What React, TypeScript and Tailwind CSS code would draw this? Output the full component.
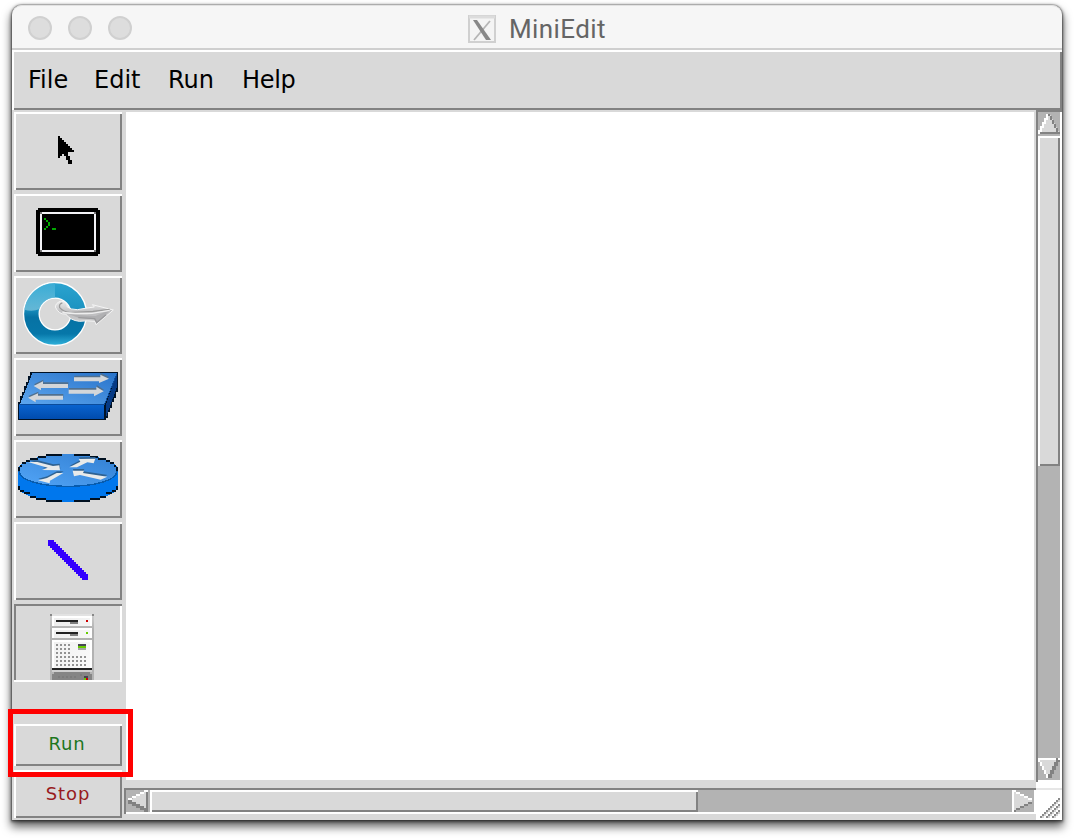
import React from 'react';

type IconProps = { viewBox: string; children: React.ReactNode; crisp?: boolean };

function Icon({ viewBox, children, crisp = true }: IconProps) {
  return (
    <svg viewBox={viewBox} className="block h-[74px] w-[104px]" shapeRendering={crisp ? 'crispEdges' : 'auto'}>
      {children}
    </svg>
  );
}

const cursorRuns: [number, number, number][] = [
  [0, 0, 1], [1, 0, 2], [2, 0, 3], [3, 0, 4], [4, 0, 5], [5, 0, 6], [6, 0, 7], [7, 0, 8],
  [8, 0, 5], [9, 0, 2], [9, 3, 2], [10, 0, 1], [10, 4, 2], [11, 4, 2], [12, 5, 2], [13, 5, 2],
];

function CursorIcon() {
  return (
    <Icon viewBox="48 42 312 222">
      {cursorRuns.map(([row, col, len], i) => (
        <rect key={i} x={174 + col * 6} y={108 + row * 6} width={len * 6} height={6} fill="#000" />
      ))}
    </Icon>
  );
}

function HostIcon() {
  return (
    <Icon viewBox="48 288 312 222">
      <path d="M114 324H294V330H300V462H294V468H114V462H108V330H114Z" fill="#000" />
      <rect x="123" y="339" width="162" height="114" fill="none" stroke="#f2f2f6" strokeWidth="6" />
      {[[120, 336], [282, 336], [120, 450], [282, 450]].map(([x, y]) => (
        <rect key={`${x}-${y}`} x={x} y={y} width="6" height="6" fill="#777" />
      ))}
      <path
        d="M132 354h6v6h6v6h6v12h-6v6h-6v6h-6v-6h6v-6h6v-12h-6v-6h-6ZM156 384h12v6h-12Z"
        fill="#00a800"
      />
    </Icon>
  );
}

function SwitchIcon() {
  return (
    <Icon viewBox="48 24 312 222" crisp={false}>
      <defs>
        <linearGradient id="ring" gradientUnits="userSpaceOnUse" x1="0" y1="39" x2="0" y2="225">
          <stop offset="0" stopColor="#2aa3cf" />
          <stop offset="0.4" stopColor="#1d94c2" />
          <stop offset="0.55" stopColor="#0672a4" />
          <stop offset="0.82" stopColor="#0677a9" />
          <stop offset="1" stopColor="#2fb0da" />
        </linearGradient>
        <linearGradient id="gloss" x1="0" y1="0" x2="0" y2="1">
          <stop offset="0" stopColor="#3fb0d8" />
          <stop offset="1" stopColor="#7ec4dd" />
        </linearGradient>
        <linearGradient id="plane" x1="0" y1="0" x2="0" y2="1">
          <stop offset="0" stopColor="#ececec" />
          <stop offset="0.5" stopColor="#bcbcbe" />
          <stop offset="1" stopColor="#d4d4d4" />
        </linearGradient>
      </defs>
      <circle cx="165" cy="132" r="71" fill="none" stroke="#fff" strokeWidth="51" />
      <circle cx="165" cy="132" r="71" fill="none" stroke="url(#ring)" strokeWidth="43" />
      <path d="M73 119A93 93 0 0 1 165 39V83A49 49 0 0 0 118 118Q96 126 73 119Z" fill="url(#gloss)" opacity=".75" />
      <path
        d="M181 94C194 92 203 103 201 110Q211 119 232 119Q265 113 283 111L277 104L340 120L288 164L285 154Q262 151 238 154Q211 151 197 132Q176 134 166 111Q167 99 181 94Z"
        fill="url(#plane)" stroke="#f5f5f5" strokeWidth="3"
      />
      <path d="M187 99Q176 101 179 113Q190 126 210 128L279 124L329 118" fill="none" stroke="#9c9c9c" strokeWidth="4" />
      <path d="M200 130Q224 136 286 138L331 120L290 158L284 148L235 143Z" fill="#b0b0b2" />
      <path d="M187 126Q208 132 276 130L329 121" fill="none" stroke="#eeeeee" strokeWidth="4" />
      <path d="M235 143L284 146L290 158L318 134" fill="none" stroke="#9a9a9c" strokeWidth="4" />
    </Icon>
  );
}

function LegacySwitchIcon() {
  return (
    <Icon viewBox="48 270 312 222">
      <defs>
        <linearGradient id="swTop" x1="0" y1="1" x2="1" y2="0">
          <stop offset="0" stopColor="#5da6ee" />
          <stop offset="1" stopColor="#2873ca" />
        </linearGradient>
        <linearGradient id="swFront" x1="0" y1="0" x2="0" y2="1">
          <stop offset="0" stopColor="#0a64d0" />
          <stop offset="1" stopColor="#004cae" />
        </linearGradient>
      </defs>
      <path
        d="M90 306H354V366H348V384H342V396H336V414H330V426H324V444H318V450H54V396H60V378H66V366H72V348H78V336H84V318H90Z"
        fill="#001226"
      />
      <path d="M97 310H350L316 402H60Z" fill="url(#swTop)" />
      <path d="M57 403H313V446H57Z" fill="url(#swFront)" />
      <path d="M318 402L350 314V354L318 442Z" fill="#063a85" />
      <path d="M57 402H314L350 312" fill="none" stroke="#0b4c9c" strokeWidth="3" />
      <g shapeRendering="auto">
        <g fill="#50708f" transform="translate(1 -5)">
          <path d="M222 322H301V314L327 326L297 339V334H222Z" />
          <path d="M204 342V354H123V361L101 348L129 334V342Z" />
          <path d="M206 359H289V350L311 364L282 379V371H206Z" />
          <path d="M189 377V389H107V397L84 383L114 370V377Z" />
        </g>
        <g fill="#d3d6d9">
          <path d="M222 322H301V314L327 326L297 339V334H222Z" />
          <path d="M204 342V354H123V361L101 348L129 334V342Z" />
          <path d="M206 359H289V350L311 364L282 379V371H206Z" />
          <path d="M189 377V389H107V397L84 383L114 370V377Z" />
        </g>
      </g>
    </Icon>
  );
}

function RouterIcon() {
  return (
    <Icon viewBox="48 36 312 222">
      <defs>
        <linearGradient id="rtTop" x1="0" y1="1" x2="1" y2="0">
          <stop offset="0" stopColor="#52a5f7" />
          <stop offset="1" stopColor="#327fd2" />
        </linearGradient>
      </defs>
      <path d="M54 121C54 94 117 72 204 72S354 94 354 121V168C354 194 289 216 204 216S54 194 54 168Z" fill="#0077ed" />
      <ellipse cx="204" cy="121" rx="147" ry="48" fill="url(#rtTop)" />
      <path d="M57 124C64 184 344 184 351 124" fill="none" stroke="#075bad" strokeWidth="4" />
      <path
        d="M57 112V124M57 169V180M351 112V124M351 169V180M63 105V111M345 105V111M66 99H78M330 99H342M78 93H90M318 93H330M90 87H114M294 87H318M114 81H138M270 81H294M138 75H186M222 75H270M60 183H72M336 183H348M72 189H90M318 189H336M90 201H108M300 201H318M108 207H138M270 207H300M138 213H186M222 213H270"
        fill="none" stroke="#001020" strokeWidth="6"
      />
      <g shapeRendering="auto">
        <g fill="#2f6292" transform="translate(1 -5)">
          <path d="M84 96L112 96L159 108L178 106L180 121L126 120L143 113Z" />
          <path d="M208 112L241 95L236 87L286 86L281 100L262 97L231 112Z" />
          <path d="M114 151L141 144L170 129H190L150 152L149 160Z" />
          <path d="M218 122H252L249 129L322 140L302 149L240 135L222 139Z" />
        </g>
        <g fill="#e8eaea">
          <path d="M84 96L112 96L159 108L178 106L180 121L126 120L143 113Z" />
          <path d="M208 112L241 95L236 87L286 86L281 100L262 97L231 112Z" />
          <path d="M114 151L141 144L170 129H190L150 152L149 160Z" />
          <path d="M218 122H252L249 129L322 140L302 149L240 135L222 139Z" />
        </g>
      </g>
    </Icon>
  );
}

function LinkIcon() {
  return (
    <Icon viewBox="48 282 312 222">
      {Array.from({ length: 18 }, (_, i) => (
        <rect key={i} x={144 + i * 6} y={330 + i * 6} width="18" height="18" fill="#3300ff" />
      ))}
    </Icon>
  );
}

function ControllerIcon() {
  const dots: [number, number][] = [];
  [147, 159, 171].forEach((y) => [168, 180, 192, 204].forEach((x) => dots.push([x, y])));
  [183, 195, 207].forEach((y) => [168, 180, 192, 204, 216, 228, 240, 252].forEach((x) => dots.push([x, y])));
  return (
    <Icon viewBox="48 33 312 222">
      <defs>
        <linearGradient id="body" x1="0" y1="0" x2="1" y2="1">
          <stop offset="0" stopColor="#eeeeee" />
          <stop offset="1" stopColor="#fafafa" />
        </linearGradient>
        <linearGradient id="rails" x1="0" y1="0" x2="0" y2="1">
          <stop offset="0" stopColor="#cfcfcf" />
          <stop offset="0.25" stopColor="#b0b0b0" />
          <stop offset="1" stopColor="#b4b4b4" />
        </linearGradient>
      </defs>
      <rect x="150" y="57" width="132" height="198" fill="url(#rails)" />
      <rect x="156" y="57" width="120" height="6" fill="#e2e2e2" />
      <path d="M150 57h6v6h-6ZM276 57h6v6h-6Z" fill="#888" />
      <path d="M156 63H276V93H156ZM156 99H276V129H156ZM156 135H276V219H156Z" fill="#fff" />
      <path d="M162 69H270V93H162ZM162 105H270V129H162ZM162 141H270V219H162Z" fill="url(#body)" />
      <path d="M168 75H234V81H168ZM168 111H234V117H168ZM156 219H276V225H156Z" fill="#222" />
      <path d="M210 81H234V87H210ZM210 117H234V123H210Z" fill="#808080" />
      <rect x="258" y="75" width="6" height="6" fill="#cc0000" />
      <rect x="258" y="111" width="6" height="6" fill="#66cc00" />
      {dots.map(([x, y]) => <rect key={`${x}-${y}`} x={x} y={y} width="6" height="6" fill="#929292" />)}
      <rect x="234" y="147" width="24" height="6" fill="#474753" />
      <rect x="234" y="153" width="24" height="6" fill="#66cc00" />
      <rect x="234" y="159" width="24" height="6" fill="#a5a5a5" />
      <rect x="156" y="225" width="120" height="6" fill="#d0d0d0" />
      <path d="M162 231H270V237H276V255H156V237H162Z" fill="#858585" />
      <path d="M174 243h6v6h-6ZM186 243h6v6h-6ZM198 243h6v6h-6ZM210 243h6v6h-6ZM222 243h6v6h-6ZM240 237h6v6h-6Z" fill="#7c7c7c" />
      <rect x="252" y="243" width="12" height="6" fill="#444450" />
      <rect x="252" y="249" width="6" height="6" fill="#66cc00" />
      <rect x="258" y="249" width="6" height="6" fill="#cc0000" />
    </Icon>
  );
}

const tools = [CursorIcon, HostIcon, SwitchIcon, LegacySwitchIcon, RouterIcon, LinkIcon];

const raised = 'bg-[#d9d9d9] p-0.5 shadow-[inset_2px_2px_#fff,inset_-2px_-2px_#828282]';
const trough = 'bg-[#b3b3b3] shadow-[inset_2px_2px_#828282,inset_-2px_-2px_#fff]';

function ScrollArrow({ dir }: { dir: 'up' | 'down' | 'left' | 'right' }) {
  return (
    <svg viewBox="0 0 11 11" className="block h-[22px] w-[22px] shrink-0" shapeRendering="crispEdges">
      {dir === 'up' && (
        <>
          <path d="M5 1L0 11H11L6 1Z" fill="#d9d9d9" />
          <path d="M4 1h2v1h-1v2h-1v2h-1v2h-1v2h-1v1h-1v-2h1v-2h1v-2h1v-2h1Z" fill="#fff" />
          <path d="M5 1h1v1h1v2h1v2h1v2h1v2h1v1H1v-1h8v-2h-1v-2h-1v-2h-1v-2h-1Z" fill="#828282" />
        </>
      )}
      {dir === 'down' && (
        <>
          <path d="M0 0H11L6 10H5Z" fill="#d9d9d9" />
          <path d="M0 0h11v1H1v1h1v2h1v2h1v2h1v2h-1v-2h-1v-2h-1v-2h-1v-2H0Z" fill="#fff" />
          <path d="M10 1h1v1h-1v2h-1v2h-1v2h-1v2H5v-2h1v-2h1v-2h1v-2h1v-2h1Z" fill="#828282" />
        </>
      )}
      {dir === 'left' && (
        <>
          <path d="M1 5.5L11 0V11Z" fill="#d9d9d9" />
          <path d="M11 0v1H9v1H7v1H5v1H3v1H1V4h2V3h2V2h2V1h2V0Z" fill="#fff" />
          <path d="M10 1h1v10H9v-1H7V9H5V8H3V7H1V5h2v1h2v1h2v1h2v1h1Z" fill="#828282" />
        </>
      )}
      {dir === 'right' && (
        <>
          <path d="M0 0L10 5V6L0 11Z" fill="#d9d9d9" />
          <path d="M0 0h2v1h2v1h2v1h2v1h2v1H8V4H6V3H4V2H2V1H1v10H0Z" fill="#fff" />
          <path d="M10 5v1H8v1H6v1H4v1H2v1H1v1h1v-1h2v-1h2V8h2V7h2Z" fill="#828282" />
        </>
      )}
    </svg>
  );
}

export default function App() {
  return (
    <div className="relative h-[838px] w-[1074px] overflow-hidden bg-white pt-[5px] pl-3 font-['DejaVu_Sans',sans-serif]">
      <div className="flex h-[815px] w-[1050px] flex-col rounded-t-[10px] bg-[#d9d9d9] shadow-[0_0_0_1px_rgba(0,0,0,0.12),0_1px_3px_1px_rgba(0,0,0,0.5),0_6px_10px_1px_rgba(0,0,0,0.6)]">
        <header className="flex h-[45px] shrink-0 items-center rounded-t-[10px] border-t border-b-2 border-t-[#e2e2e2] border-b-[#cfcfcf] bg-[#f6f6f6] pt-0.5 pl-4">
          <div className="flex w-[440px] gap-4">
            {[0, 1, 2].map((i) => (
              <span key={i} className="h-6 w-6 rounded-full border-2 border-[#d0d0d0] bg-[#dddddd]" />
            ))}
          </div>
          <svg viewBox="0 0 28 28" className="mt-0.5 h-7 w-7">
            <rect x="1" y="1" width="26" height="26" fill="#f4f4f4" stroke="#d0d0d0" strokeWidth="2" />
            <path d="M1 2H27" stroke="#dcdcdc" strokeWidth="3" />
            <path d="M22 6L6 25" stroke="#b5b5b5" strokeWidth="1.8" />
            <path d="M5 5H9L23 25H18Z" fill="#888" />
          </svg>
          <h1 className="mt-0.5 ml-[13px] font-['Roboto',sans-serif] text-[26px] leading-none tracking-[0.4px] text-[#656565]">MiniEdit</h1>
        </header>

        <nav className={`flex h-[60px] shrink-0 text-[24px] leading-[28px] text-black ${raised}`}>
          <span className="mt-[14px] ml-[14px] w-[66px]">File</span>
          <span className="mt-[14px] w-[74px]">Edit</span>
          <span className="mt-[14px] w-[74px]">Run</span>
          <span className="mt-[14px] tracking-[-0.3px]">Help</span>
        </nav>

        <div className="flex h-[710px]">
          <aside className="flex w-[112px] shrink-0 flex-col gap-1 pt-0.5 pl-0.5">
            {tools.map((Tool, i) => (
              <button key={i} className={`h-[78px] w-[108px] ${raised}`}>
                <Tool />
              </button>
            ))}
            <button className="h-[78px] w-[108px] bg-[#d9d9d9] p-0.5 shadow-[inset_0_2px_#828282,inset_0_-2px_#fff,inset_2px_0_#828282,inset_-2px_0_#fff]">
              <ControllerIcon />
            </button>
            <button className={`mt-[38px] h-[42px] w-[108px] ${raised}`}>
              <span className="block pr-0.5 pb-0.5 text-[18px] leading-none tracking-[0.9px] text-[#1d761d]">Run</span>
            </button>
            <button className={`h-12 w-[108px] ${raised}`}>
              <span className="block text-[18px] leading-none tracking-[0.9px] text-[#981b1e]">Stop</span>
            </button>
          </aside>

          <main className="flex w-[912px] flex-col">
            <div className="mt-0.5 mr-0.5 ml-0.5 h-[668px] bg-white" />
            <div className={`mt-2 flex h-[26px] p-0.5 ${trough}`}>
              <ScrollArrow dir="left" />
              <div className={`ml-0.5 h-[22px] w-[548px] ${raised}`} />
              <div className="flex-1" />
              <ScrollArrow dir="right" />
            </div>
          </main>

          <div className="flex w-[26px] flex-col">
            <div className={`flex h-[672px] flex-col p-0.5 ${trough}`}>
              <ScrollArrow dir="up" />
              <div className={`mt-0.5 h-[330px] ${raised}`} />
              <div className="flex-1" />
              <ScrollArrow dir="down" />
            </div>
            <div className="h-[8px] border-b-2 border-[#e6e6e6] bg-white" />
            <svg viewBox="0 0 13 15" className="h-[30px] w-[26px] bg-white" shapeRendering="crispEdges">
              {[12, 9, 6].map((n, k) =>
                Array.from({ length: n - 2 }, (_, i) => (
                  <g key={`${n}-${i}`}>
                    <rect x={11 - i} y={4 + k * 3 + i} width="1" height="1" fill="#8a8a8a" />
                    {i > 0 && <rect x={12 - i} y={4 + k * 3 + i} width="1" height="1" fill="#d4d4d4" />}
                  </g>
                )),
              )}
            </svg>
          </div>
        </div>
      </div>
      <div className="pointer-events-none absolute top-[709px] left-[8px] h-[68px] w-[125px] border-[5px] border-[#ff0000]" />
    </div>
  );
}
